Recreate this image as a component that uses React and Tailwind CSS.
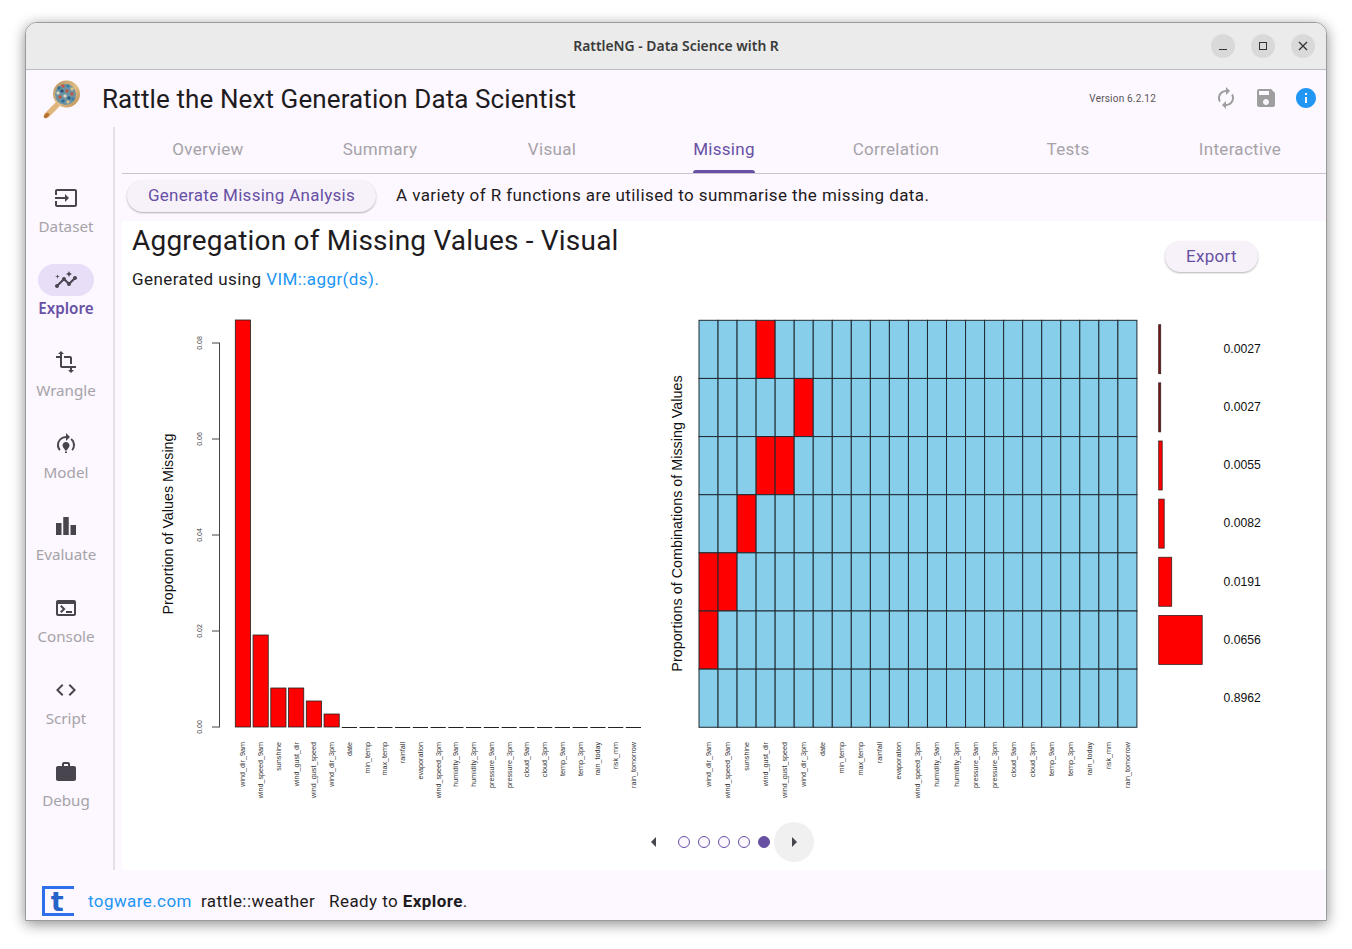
import React from 'react';
import {
  MdInput, MdInsights, MdTransform, MdModelTraining, MdLeaderboard, MdTerminal, MdCode, MdWork,
  MdAutorenew, MdSave, MdInfo, MdArrowLeft, MdArrowRight,
} from 'react-icons/md';

const RAIL = [
  { label: 'Dataset', Icon: MdInput },
  { label: 'Explore', Icon: MdInsights, active: true },
  { label: 'Wrangle', Icon: MdTransform },
  { label: 'Model', Icon: MdModelTraining },
  { label: 'Evaluate', Icon: MdLeaderboard },
  { label: 'Console', Icon: MdTerminal },
  { label: 'Script', Icon: MdCode },
  { label: 'Debug', Icon: MdWork },
];

const TABS = ['Overview', 'Summary', 'Visual', 'Missing', 'Correlation', 'Tests', 'Interactive'];

const VARS = [
  'wind_dir_9am', 'wind_speed_9am', 'sunshine', 'wind_gust_dir', 'wind_gust_speed', 'wind_dir_3pm', 'date',
  'min_temp', 'max_temp', 'rainfall', 'evaporation', 'wind_speed_3pm', 'humidity_9am', 'humidity_3pm',
  'pressure_9am', 'pressure_3pm', 'cloud_9am', 'cloud_3pm', 'temp_9am', 'temp_3pm', 'rain_today', 'risk_mm',
  'rain_tomorrow',
];

const BAR_TOPS = [320, 635, 688, 688, 701, 714];
const TICKS = [['0.00', 727], ['0.02', 631], ['0.04', 535], ['0.06', 439], ['0.08', 343]];

const COMBOS = [[3], [5], [3, 4], [2], [0, 1], [0], []];
const PROPS = [
  ['0.0027', 2], ['0.0027', 2], ['0.0055', 3.5], ['0.0082', 5.5], ['0.0191', 13], ['0.0656', 43.5], ['0.8962', 0],
];

const ROW_H = 58.14;
const COL_W = 19.04;

const LOGO_BITS = [
  [17, 11, '#2f6d94'], [21, 9, '#c8503c'], [26, 9, '#3d7fa6'], [30, 12, '#d9c28f'],
  [16, 16, '#d9d3c0'], [20, 14, '#24506e'], [25, 14, '#c8503c'], [30, 17, '#c8503c'],
  [18, 20, '#c8503c'], [23, 19, '#e0d8c4'], [27, 21, '#2b5878'], [21, 24, '#2f6d94'],
  [26, 25, '#d9c28f'], [31, 22, '#3d7fa6'],
];

function Logo() {
  return (
    <svg width="42" height="44" viewBox="0 0 42 44">
      <defs>
        <linearGradient id="rim" x1="0" y1="0" x2="1" y2="1">
          <stop offset="0" stopColor="#b4925f" />
          <stop offset="0.55" stopColor="#e2bd85" />
          <stop offset="1" stopColor="#b98c4e" />
        </linearGradient>
      </defs>
      <path d="M5 38 L15 28" stroke="#e0b67c" strokeWidth="5.5" strokeLinecap="round" />
      <path d="M3.5 39.5 L5.5 37.5" stroke="#b8702f" strokeWidth="3.5" strokeLinecap="round" />
      <circle cx="24.5" cy="17" r="13.5" fill="url(#rim)" />
      <circle cx="23.5" cy="17.5" r="10.5" fill="#6b93a3" />
      {LOGO_BITS.map(([x, y, c]) => (
        <rect key={`${x}-${y}`} x={x - 1.5} y={y - 1.5} width="3" height="3" rx="1" fill={c} />
      ))}
    </svg>
  );
}

function VarLabels({ x0, step }) {
  return VARS.map((name, i) => {
    const x = x0 + i * step;
    return (
      <text
        key={name}
        transform={`translate(${x + 2.5} 742) rotate(-90)`}
        textAnchor="end"
        fontSize="7.2"
        fill="#333"
        fontFamily="Liberation Sans, sans-serif"
      >
        {name}
      </text>
    );
  });
}

function Charts() {
  return (
    <svg width="1204" height="510" viewBox="122 300 1204 510" className="block">
      {/* proportion of values missing */}
      <text
        transform="translate(173 524) rotate(-90)"
        textAnchor="middle"
        fontSize="14.3"
        fill="#111"
        fontFamily="Liberation Sans, sans-serif"
      >
        Proportion of Values Missing
      </text>
      <path d="M219.5 343 V727" stroke="#444" strokeWidth="1" />
      {TICKS.map(([t, y]) => (
        <g key={t}>
          <path d={`M212 ${y} H220`} stroke="#444" strokeWidth="1" />
          <text
            transform={`translate(201.5 ${y}) rotate(-90)`}
            textAnchor="middle"
            fontSize="7"
            fill="#444"
            fontFamily="Liberation Sans, sans-serif"
          >
            {t}
          </text>
        </g>
      ))}
      {VARS.map((name, i) => {
        const x = 235.3 + i * 17.75;
        const top = BAR_TOPS[i];
        if (!top) return <path key={name} d={`M${x} 727.5 h15.2`} stroke="#222" strokeWidth="1" />;
        return (
          <rect key={name} x={x} y={top} width="15.2" height={727 - top} fill="#ff0000" stroke="#222" strokeWidth="0.8" />
        );
      })}
      <VarLabels x0={242.9} step={17.75} />

      {/* combinations */}
      <text
        transform="translate(682 523.5) rotate(-90)"
        textAnchor="middle"
        fontSize="14.35"
        fill="#111"
        fontFamily="Liberation Sans, sans-serif"
      >
        Proportions of Combinations of Missing Values
      </text>
      {COMBOS.map((reds, r) =>
        VARS.map((name, c) => (
          <rect
            key={`${r}-${name}`}
            x={699 + c * COL_W}
            y={320.3 + r * ROW_H}
            width={COL_W}
            height={ROW_H}
            fill={reds.includes(c) ? '#ff0000' : '#87ceeb'}
            stroke="#1f2a30"
            strokeWidth="1"
          />
        ))
      )}
      <VarLabels x0={708.5} step={COL_W} />

      {PROPS.map(([label, w], r) => (
        <g key={r}>
          {w > 0 && (
            <rect
              x="1158.7"
              y={324.7 + r * ROW_H}
              width={w}
              height="49"
              fill={w < 3 ? '#7a1414' : '#ff0000'}
              stroke="#3a2020"
              strokeWidth="0.8"
            />
          )}
          <text x="1223.5" y={353 + r * ROW_H} fontSize="12.2" fill="#111" fontFamily="Liberation Sans, sans-serif">
            {label}
          </text>
        </g>
      ))}
    </svg>
  );
}

function WinButton({ children }) {
  return (
    <div className="w-6 h-6 rounded-full bg-[#d9d9d9] flex items-center justify-center">{children}</div>
  );
}

export default function App() {
  return (
    <div className="w-[1352px] h-[949px] bg-white pl-[25px] pt-[22px] overflow-hidden font-['Roboto',sans-serif]">
      <div className="w-[1302px] h-[899px] flex flex-col border border-[#9b9b9b] rounded-t-[12px] overflow-hidden shadow-[0_3px_14px_rgba(0,0,0,0.45)] bg-[#fdf7ff]">
        {/* title bar */}
        <div className="h-[47px] shrink-0 bg-[#ebebeb] border-b border-[#bdbdbd] relative flex items-center justify-center">
          <span className="font-['Noto_Sans',sans-serif] font-semibold text-[13.9px] text-[#3a3a3a]">
            RattleNG - Data Science with R
          </span>
          <div className="absolute right-[11px] top-[11px] flex gap-4">
            <WinButton>
              <div className="w-2 h-px bg-[#333] mt-[6px]" />
            </WinButton>
            <WinButton>
              <div className="w-2 h-2 border border-[#333]" />
            </WinButton>
            <WinButton>
              <svg width="10" height="10" viewBox="0 0 10 10">
                <path d="M1 1 L9 9 M9 1 L1 9" stroke="#333" strokeWidth="1.3" />
              </svg>
            </WinButton>
          </div>
        </div>

        {/* app bar */}
        <div className="h-[57px] shrink-0 flex items-center pl-4 pr-[7px]">
          <Logo />
          <h1 className="ml-[18px] mt-px text-[26px] leading-none text-[#1d1b20] tracking-[0.1px]">
            Rattle the Next Generation Data Scientist
          </h1>
          <span className="ml-auto text-[10px] text-[#555] tracking-[0.2px]">Version 6.2.12</span>
          <div className="ml-[58px] flex items-center gap-4 mr-[1px] -mt-px">
            <MdAutorenew className="w-6 h-6 text-[#9e9e9e]" />
            <MdSave className="w-6 h-6 text-[#9e9e9e]" />
            <MdInfo className="w-6 h-6 text-[#2196f3]" />
          </div>
        </div>

        {/* body */}
        <div className="flex-1 flex min-h-0">
          <nav className="w-[87px] shrink-0 pt-[55px] pr-[7px] flex flex-col items-center font-['Noto_Sans',sans-serif]">
            {RAIL.map(({ label, Icon, active }) => (
              <div key={label} className="h-[82px] w-full flex flex-col items-center">
                <div
                  className={`w-14 h-8 rounded-full flex items-center justify-center ${active ? 'bg-[#e8def8]' : ''}`}
                >
                  <Icon className="w-6 h-6 text-[#49454f]" />
                </div>
                <span
                  className={`mt-[2px] text-[15.2px] leading-[20px] ${
                    active ? 'font-semibold text-[#6750a4]' : 'text-[#a5a3a8]'
                  }`}
                >
                  {label}
                </span>
              </div>
            ))}
          </nav>
          <div className="w-[2px] bg-[#e5dfe8] shrink-0" />

          <div className="ml-[7px] flex-1 flex flex-col min-w-0">
            {/* tabs */}
            <div className="h-[47px] shrink-0 flex border-b border-[#cac4d0]">
              {TABS.map((t) => (
                <div key={t} className="flex-1 flex justify-center">
                  <div
                    className={`relative h-full flex items-center text-[17px] tracking-[0.3px] ${
                      t === 'Missing' ? 'text-[#6750a4]' : 'text-[#a5a3a8]'
                    }`}
                  >
                    {t}
                    {t === 'Missing' && (
                      <div className="absolute left-0 right-0 bottom-0 h-[3px] rounded-t-[3px] bg-[#6750a4]" />
                    )}
                  </div>
                </div>
              ))}
            </div>

            {/* action row */}
            <div className="h-[47px] shrink-0 flex items-start pt-[6px] pl-[5px]">
              <button className="h-8 w-[249px] rounded-full bg-[#f7f2fa] text-[#6750a4] text-[17px] tracking-[0.29px] shadow-[0_1px_2px_rgba(0,0,0,0.3)]">
                Generate Missing Analysis
              </button>
              <span className="ml-5 text-[17px] leading-[31px] tracking-[0.42px] text-[#1d1b20]">
                A variety of R functions are utilised to summarise the missing data.
              </span>
            </div>

            {/* content */}
            <div className="flex-1 bg-white flex flex-col min-h-0">
              <div className="h-[79px] shrink-0 flex items-start justify-between pl-[10px] pr-[68px] pt-px">
                <div>
                  <h2 className="text-[28px] leading-[38px] tracking-[0.2px] text-[#1d1b20]">
                    Aggregation of Missing Values - Visual
                  </h2>
                  <p className="mt-[7px] text-[17px] leading-[24px] tracking-[0.42px] text-[#1d1b20]">
                    Generated using <span className="text-[#2196f3]">VIM::aggr(ds).</span>
                  </p>
                </div>
                <button className="mt-[19px] w-[93px] h-[31px] rounded-full bg-[#f7f2fa] text-[#6750a4] text-[17px] tracking-[0.3px] shadow-[0_1px_2px_rgba(0,0,0,0.3)]">
                  Export
                </button>
              </div>
              <Charts />
              <div className="mt-[12px] flex items-center pl-[520px]">
                <MdArrowLeft className="w-6 h-6 text-[#49454f]" />
                <div className="ml-[12px] flex gap-2">
                  {[0, 1, 2, 3, 4].map((i) => (
                    <div
                      key={i}
                      className={`w-3 h-3 rounded-full border border-[#6750a4] ${
                        i === 4 ? 'bg-[#6750a4]' : 'bg-[#fdf7ff]'
                      }`}
                    />
                  ))}
                </div>
                <div className="ml-[4px] w-10 h-10 rounded-full bg-[#f0f0f0] flex items-center justify-center">
                  <MdArrowRight className="w-6 h-6 text-[#49454f]" />
                </div>
              </div>
            </div>
          </div>
        </div>

        {/* status bar */}
        <div className="h-[50px] shrink-0 flex items-center pl-4 pt-[12px] text-[17px] tracking-[0.42px] text-[#1d1b20]">
          <div className="w-[32px] h-[30px] border-l-[3px] border-y-[3px] border-[#2f6fed] flex items-center justify-center">
            <span className="font-['DejaVu_Sans',sans-serif] font-bold text-[27px] leading-none text-[#2563c9] mr-[4px]">
              t
            </span>
          </div>
          <span className="ml-[14px] mt-[2px] text-[#2196f3]">togware.com</span>
          <span className="ml-[9px] mt-[2px]">rattle::weather</span>
          <span className="ml-[14px] mt-[2px]">
            Ready to <b className="font-bold">Explore</b>.
          </span>
        </div>
      </div>
    </div>
  );
}
